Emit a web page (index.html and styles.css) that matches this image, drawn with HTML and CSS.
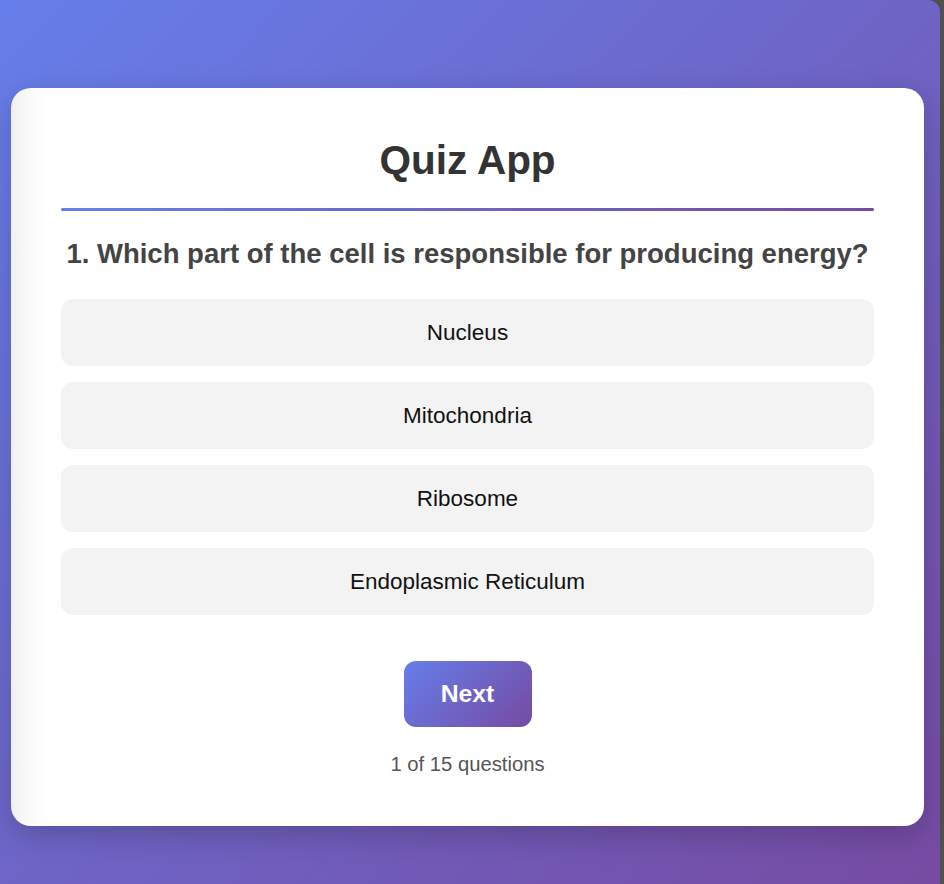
FILE: index.html
```html
<!DOCTYPE html>
<html lang="en">
<head>
<meta charset="utf-8">
<title>Quiz App</title>
<link rel="stylesheet" href="styles.css">
</head>
<body>
<div class="frame">
  <div class="card">
    <h1 class="title">Quiz App</h1>
    <div class="divider"></div>
    <h2 class="question">1. Which part of the cell is responsible for producing energy?</h2>
    <div class="options">
      <button class="option">Nucleus</button>
      <button class="option">Mitochondria</button>
      <button class="option">Ribosome</button>
      <button class="option">Endoplasmic Reticulum</button>
    </div>
    <div class="actions">
      <button class="next">Next</button>
    </div>
    <p class="progress">1 of 15 questions</p>
  </div>
</div>
</body>
</html>
```

FILE: styles.css
```css
html, body {
  margin: 0;
  padding: 0;
  height: 100%;
}
body {
  background: #505050;
  font-family: "Liberation Sans", Arial, sans-serif;
  overflow: hidden;
}
.frame {
  width: 940px;
  height: 884px;
  box-sizing: border-box;
  padding: 88px 16px 0 11px;
  background: linear-gradient(135deg, #667eea 0%, #764ba2 100%);
  border-top-right-radius: 12px;
}
.card {
  width: 913px;
  box-sizing: border-box;
  padding: 50px 50px 50px;
  background: linear-gradient(to right, #efefef 0px, #fafafa 18px, #ffffff 36px);
  border-radius: 20px;
  box-shadow: 0 10px 30px rgba(0, 0, 0, 0.2);
  display: flex;
  flex-direction: column;
}
.title {
  margin: 0;
  padding-top: 1px;
  font-size: 40.5px;
  line-height: 42px;
  font-weight: 700;
  color: #333;
  text-align: center;
}
.divider {
  margin-top: 27px;
  height: 3px;
  border-radius: 2px;
  background: linear-gradient(90deg, #667eea, #764ba2);
}
.question {
  margin: 28px 0 0;
  font-size: 27.5px;
  line-height: 30px;
  font-weight: 700;
  color: #444;
  text-align: center;
}
.options {
  margin-top: 30px;
  display: flex;
  flex-direction: column;
  gap: 16px;
}
.option {
  border: none;
  background: #f3f3f3;
  border-radius: 12px;
  height: 67px;
  font-family: "Liberation Sans", Arial, sans-serif;
  font-size: 22.5px;
  color: #111;
  text-align: center;
  padding: 0;
}
.actions {
  margin-top: 46px;
  display: flex;
  justify-content: center;
}
.next {
  width: 128px;
  height: 66px;
  border: none;
  border-radius: 12px;
  background: linear-gradient(135deg, #667eea 0%, #764ba2 100%);
  color: #fff;
  font-family: "Liberation Sans", Arial, sans-serif;
  font-size: 24.75px;
  font-weight: 700;
  padding: 0;
}
.progress {
  margin: 26px 0 0;
  font-size: 20.25px;
  line-height: 23px;
  color: #555;
  text-align: center;
}
```
